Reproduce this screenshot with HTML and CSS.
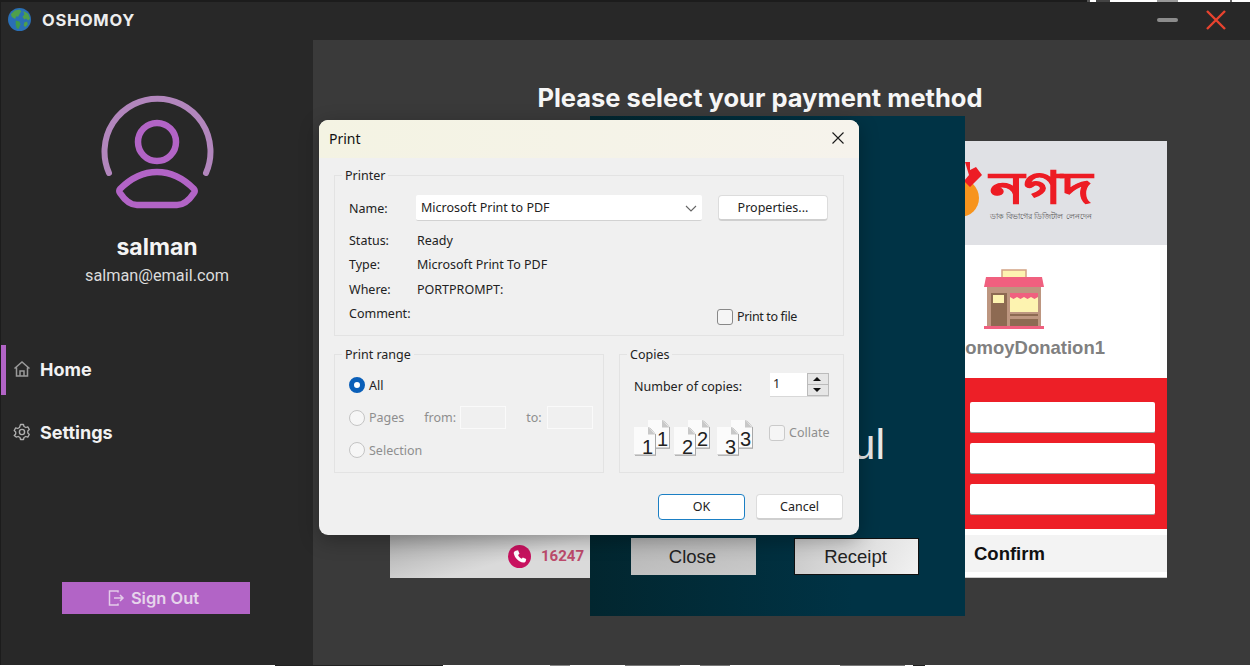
FILE: index.html
```html
<!DOCTYPE html>
<html>
<head>
    <meta charset="utf-8">
    <title>OSHOMOY</title>
    <link rel="stylesheet" href="styles.css">
</head>
<body>
<div class="app">
    <div class="top-strip"></div>
    <div class="titlebar">
        <div class="brand">
            <svg class="globe" viewBox="0 0 24 24">
                <circle cx="12" cy="12" r="12" fill="#2a6fb5"/>
                <path d="M7 2.500l5-1 2 2-2 3-1.500 2.500-2-.5-1 3-3.500-2-1-3z" fill="#4fa04a"/>
                <path d="M16 3l5 3 2 5-2 2-2-2-2 1-2-3 2-2z" fill="#4fa04a"/>
                <path d="M8 13l4 1 1 3-2 5-2-1-1-4z" fill="#3f9a4a"/>
                <path d="M17 15l3-1 .5 3-2.500 3-1.500-2z" fill="#4fa04a"/>
            </svg>
            <span>OSHOMOY</span>
        </div>
        <div class="winbtns">
            <span class="minimize"></span>
            <svg class="closex" viewBox="0 0 20 20"><path d="M1 1l18 18M19 1L1 19" stroke="#e8432f" stroke-width="2.400" fill="none"/></svg>
        </div>
    </div>
    <div class="content">
        <aside class="sidebar">
            <svg class="avatar" viewBox="0 0 114 114">
                <path d="M9 78A53 53 0 1 1 106 78" fill="none" stroke="#b286bd" stroke-width="6" stroke-linecap="round"/>
                <circle cx="57" cy="47" r="19" fill="none" stroke="#b264c6" stroke-width="6.500"/>
                <path d="M57 77c14 0 27 7 37 17 1 1 1 3 0 4-4 6-9 12-17 12H37c-8 0-13-6-17-12-1-1-1-3 0-4 10-10 23-17 37-17z" fill="none" stroke="#b264c6" stroke-width="6.500" stroke-linejoin="round"/>
            </svg>
            <div class="username">salman</div>
            <div class="useremail">salman@email.com</div>
            <nav class="menu">
                <a class="menu-item active">
                    <svg viewBox="0 0 18 18"><path d="M1.500 8.500L9 2l7.500 6.500M3.500 7.500V16h11V7.500M7 16v-5h4v5" fill="none" stroke="#9a9a9a" stroke-width="1.500"/></svg>
                    Home
                </a>
                <a class="menu-item">
                    <svg viewBox="0 0 18 18"><circle cx="9" cy="9" r="2.600" fill="none" stroke="#b0b0b0" stroke-width="1.400"/><path d="M7.500 1.500h3l.5 2 1.800 1 2-.6 1.500 2.600-1.500 1.400v2.200l1.500 1.400-1.500 2.600-2-.6-1.800 1-.5 2h-3l-.5-2-1.800-1-2 .6L1.200 12.500l1.500-1.400V8.900L1.200 7.500 2.700 4.900l2 .6 1.800-1z" fill="none" stroke="#b0b0b0" stroke-width="1.300" stroke-linejoin="round"/></svg>
                    Settings
                </a>
            </nav>
            <button class="signout">
                <svg viewBox="0 0 18 18"><path d="M11 3.500V2H2.500v14H11v-1.500M7 9h9M13 6l3 3-3 3" fill="none" stroke="#e4cbe9" stroke-width="1.500"/></svg>
                Sign Out
            </button>
        </aside>
        <main class="main">
            <h1 class="heading">Please select your payment method</h1>
            <div class="paycard">
                <div class="paycard-left">
                    <div class="helpline">
                        <span class="phone">
                            <svg viewBox="0 0 24 24"><path d="M8 6l2.500-.5 1.500 3.500-1.500 1.500c.8 1.800 2 3 3.800 3.800L15.500 13l3.500 1.500-.5 2.500c-.4 1-1.500 1.500-2.500 1.300C11 17.500 6.800 13 6 8.500 5.900 7.500 6.800 6.400 8 6z" fill="#fff"/></svg>
                        </span>
                        <span class="hotline">16247</span>
                    </div>
                </div>
                <div class="paycard-right">
                    <div class="nagad-head">
                        <svg class="nagad-mark" viewBox="0 0 32 56">
                            <circle cx="10" cy="36" r="19" fill="#f7941d"/>
                            <path d="M15 0h5v8l6-3 6 8-12 12-6-6 5-6z" fill="#ed1c24"/>
                        </svg>
                        <div class="nagad-logo">
                            <span class="nagad-name">নগদ</span>
                            <span class="nagad-sub">ডাক বিভাগের ডিজিটাল লেনদেন</span>
                        </div>
                    </div>
                    <div class="merchant">
                        <svg class="shop" viewBox="0 0 60 60">
                            <rect x="18" y="1" width="24" height="10" fill="#fdf3b0" stroke="#d2a384" stroke-width="1.500"/>
                            <path d="M2 8h56l2 10H0z" fill="#f0607f"/>
                            <rect x="3" y="18" width="54" height="39" fill="#bd9680"/>
                            <rect x="7" y="24" width="16" height="33" fill="#8d6a52"/>
                            <rect x="9" y="26" width="11" height="8" fill="#fdf3b0"/>
                            <rect x="26" y="24" width="28" height="19" fill="#fdf3b0"/>
                            <path d="M26 24h28v4l-3.500 2-3.500-2-3.500 2-3.500-2-3.500 2-3.500-2-3.500 2-3.500-2z" fill="#f0607f"/>
                            <rect x="26" y="45" width="28" height="2" fill="#8d6a52"/>
                            <rect x="26" y="50" width="28" height="7" fill="#8d6a52"/>
                            <rect x="0" y="57" width="60" height="3" fill="#f0607f"/>
                        </svg>
                        <div class="merchant-name">OshomoyDonation1</div>
                    </div>
                    <div class="redform">
                        <input class="redinput" type="text">
                        <input class="redinput" type="text">
                        <input class="redinput" type="text">
                    </div>
                    <div class="confirm-wrap"><div class="confirm">Confirm</div></div>
                </div>
            </div>
        </main>
    </div>
    <div class="bottom-strip"></div>

    <div class="receipt">
        <div class="receipt-msg">Successful</div>
        <div class="receipt-btns">
            <button class="rbtn close-btn">Close</button>
            <button class="rbtn receipt-btn">Receipt</button>
        </div>
    </div>

    <div class="dialog">
        <div class="dlg-title">
            <span>Print</span>
            <svg class="dlg-x" viewBox="0 0 12 12"><path d="M.5.5l11 11M11.500.5l-11 11" stroke="#1a1a1a" stroke-width="1.100" fill="none"/></svg>
        </div>
        <div class="dlg-body">
            <fieldset class="group printer">
                <legend>Printer</legend>
                <div class="row-name">
                    <span class="lbl">Name:</span>
                    <div class="combo">Microsoft Print to PDF
                        <svg viewBox="0 0 12 7"><path d="M1 1l5 5 5-5" fill="none" stroke="#666" stroke-width="1.100"/></svg>
                    </div>
                    <div class="wbtn props">Properties...</div>
                </div>
                <div class="info"><span class="lbl">Status:</span><span>Ready</span></div>
                <div class="info"><span class="lbl">Type:</span><span>Microsoft Print To PDF</span></div>
                <div class="info"><span class="lbl">Where:</span><span>PORTPROMPT:</span></div>
                <div class="info comment">
                    <span class="lbl">Comment:</span>
                    <label class="check tofile"><i class="box"></i>Print to file</label>
                </div>
            </fieldset>
            <div class="dlg-cols">
                <fieldset class="group range">
                    <legend>Print range</legend>
                    <div class="radio on"><i class="dot"></i>All</div>
                    <div class="radio off pages">
                        <i class="dot"></i><span class="pages-lbl">Pages</span>
                        <span class="from">from:</span><i class="field"></i>
                        <span class="to">to:</span><i class="field"></i>
                    </div>
                    <div class="radio off"><i class="dot"></i>Selection</div>
                </fieldset>
                <fieldset class="group copies">
                    <legend>Copies</legend>
                    <div class="copies-row">
                        <span>Number of copies:</span>
                        <div class="spin">
                            <span class="spin-val">1</span>
                            <span class="spin-btns"><i class="up"></i><i class="down"></i></span>
                        </div>
                    </div>
                    <div class="collate-row">
                        <div class="sheets"><i class="s back"></i><i class="s front"></i><b class="num num-back">1</b><b class="num num-front">1</b></div>
                        <div class="sheets"><i class="s back"></i><i class="s front"></i><b class="num num-back">2</b><b class="num num-front">2</b></div>
                        <div class="sheets last"><i class="s back"></i><i class="s front"></i><b class="num num-back">3</b><b class="num num-front">3</b></div>
                        <label class="check collate"><i class="box"></i>Collate</label>
                    </div>
                </fieldset>
            </div>
            <div class="dlg-foot">
                <div class="wbtn ok">OK</div>
                <div class="wbtn cancel">Cancel</div>
            </div>
        </div>
    </div>
</div>
</body>
</html>
```

FILE: styles.css
```css
*{
    padding: 0;
    margin: 0;
    box-sizing: border-box;
}
html, body{
    width: 1250px;
    height: 666px;
    overflow: hidden;
    background: #282828;
}
.app{
    position: relative;
    width: 1250px;
    height: 666px;
    font-family: "Inter", "Liberation Sans", sans-serif;
    display: flex;
    flex-direction: column;
    background: #1c1c1c;
}
/* bits of another window show above and below the app */
.top-strip{
    height: 2px;
    flex: none;
    background: linear-gradient(90deg, #1c1c1c 1087px, #555 1087px, #555 1090px, #fff 1090px, #fff 1096px, #444 1096px, #444 1110px, #fff 1110px, #fff 1157px, #999 1157px, #999 1178px, #fff 1178px, #fff 1230px, #666 1230px, #666 1232px, #fff 1232px);
}
.bottom-strip{
    height: 1px;
    flex: none;
    background: linear-gradient(90deg, #fff 275px, #222 275px, #222 443px, #fff 443px, #fff 550px, #888 550px, #888 570px, #fff 570px, #fff 625px, #777 625px, #777 680px, #fff 680px, #fff 700px, #777 700px, #777 730px, #fff 730px, #fff 840px, #777 840px, #777 905px, #fff 905px, #fff 913px, #222 913px, #222 925px, #fff 925px);
}
.titlebar{
    height: 38px;
    margin-left: 1px;
    background: #282828;
    display: flex;
    justify-content: space-between;
    align-items: center;
    flex: none;
}
.brand{
    display: flex;
    align-items: center;
    padding-left: 7px;
    margin-top: -3px;
    color: #eee;
    font-weight: 700;
    font-size: 16.500px;
    letter-spacing: .7px;
}
.globe{
    width: 23px;
    height: 23px;
    margin-right: 11px;
}
.winbtns{
    display: flex;
    align-items: center;
    margin-top: -2px;
    padding-right: 24px;
}
.minimize{
    width: 21px;
    height: 4px;
    border-radius: 2px;
    background: #8c8c8c;
    margin-right: 28px;
}
.closex{
    width: 20px;
    height: 20px;
}
.content{
    flex: 1;
    margin-left: 1px;
    display: flex;
    min-height: 0;
}
.sidebar{
    width: 312px;
    background: #282828;
    display: flex;
    flex-direction: column;
    align-items: center;
    flex: none;
    padding-top: 55px;
}
.avatar{
    width: 114px;
    height: 114px;
    margin-right: 1px;
}
.username{
    margin-top: 25px;
    color: #f4f4f4;
    font-weight: 700;
    font-size: 23px;
    line-height: 26px;
}
.useremail{
    margin-top: 6px;
    color: #dcdcdc;
    font-family: "Roboto", "Liberation Sans", sans-serif;
    font-size: 16.300px;
    line-height: 20px;
}
.menu{
    width: 100%;
    margin-top: 59px;
}
.menu-item{
    display: flex;
    align-items: center;
    height: 50px;
    margin-bottom: 13px;
    padding-left: 13px;
    padding-bottom: 2px;
    color: #f2f2f2;
    font-weight: 700;
    font-size: 18px;
    border-left: 5px solid transparent;
}
.menu-item.active{
    border-left-color: #b264c6;
}
.menu-item svg{
    width: 18px;
    height: 18px;
    margin-right: 9px;
    margin-left: -6px;
}
.signout{
    margin-top: 111px;
    margin-right: 3px;
    width: 188px;
    height: 32px;
    padding-right: 5px;
    border: none;
    background: #b264c6;
    color: #e6d4eb;
    font-family: inherit;
    font-weight: 600;
    font-size: 16.500px;
    display: flex;
    align-items: center;
    justify-content: center;
}
.signout svg{
    width: 18px;
    height: 18px;
    margin-right: 6px;
}
.main{
    flex: 1;
    background: #3a3a3a;
    position: relative;
    padding-top: 42px;
}
.heading{
    font-size: 25.500px;
    line-height: 32px;
    font-weight: 700;
    color: #f6f6f6;
    text-align: center;
    padding-right: 43px;
}
.paycard{
    margin: 27px 0 0 77px;
    width: 777px;
    height: 437px;
    display: flex;
}
.paycard-left{
    width: 200px;
    display: flex;
    flex-direction: column;
    justify-content: flex-end;
}
.helpline{
    height: 44px;
    background: linear-gradient(165deg, #a8a8a8, #dadada 60%);
    display: flex;
    align-items: center;
    justify-content: flex-end;
    padding-right: 6px;
}
.phone{
    width: 23px;
    height: 23px;
    border-radius: 50%;
    background: #c8125f;
    margin-right: 10px;
    display: flex;
}
.hotline{
    color: #bd4b6c;
    font-family: "Roboto", "Liberation Sans", sans-serif;
    font-weight: 700;
    font-size: 15px;
}
.paycard-right{
    flex: 1;
    background: #fff;
    display: flex;
    flex-direction: column;
    border-bottom: 1px solid #ccc;
}
.nagad-head{
    height: 104px;
    background: #e0e1e5;
    display: flex;
    justify-content: flex-end;
    padding-right: 72px;
    padding-top: 21px;
}
.nagad-mark{
    width: 32px;
    height: 56px;
    margin-right: 8px;
}
.nagad-logo{
    display: flex;
    flex-direction: column;
    width: 105px;
}
.nagad-name{
    display: block;
    font-family: "Noto Sans", "Liberation Sans", sans-serif;
    font-weight: 700;
    font-size: 44px;
    line-height: 48px;
    color: #ed1c24;
    -webkit-text-stroke: 1px #ed1c24;
    transform: scaleX(1.300);
    transform-origin: left center;
}
.nagad-sub{
    font-size: 7.800px;
    line-height: 10px;
    color: #555;
    white-space: nowrap;
    margin-top: 1px;
}
.merchant{
    height: 133px;
    display: flex;
    flex-direction: column;
    align-items: flex-end;
    padding-top: 24px;
}
.shop{
    width: 60px;
    height: 60px;
    margin-right: 123px;
}
.merchant-name{
    margin-top: 8px;
    margin-right: 62px;
    color: #808080;
    font-family: "Liberation Sans", sans-serif;
    font-weight: 700;
    font-size: 18.500px;
}
.redform{
    height: 151px;
    background: #ed1f27;
    display: flex;
    flex-direction: column;
    align-items: flex-end;
    gap: 10px;
    padding: 24px 12px 0 0;
}
.redinput{
    width: 185px;
    height: 31px;
    border: none;
    border-bottom: 1px solid #999;
    border-radius: 2px;
    background: #fff;
}
.confirm-wrap{
    flex: 1;
    padding: 6px 0 0;
}
.confirm{
    height: 37px;
    background: #f3f3f3;
    padding-left: 384px;
    font-family: "Liberation Sans", sans-serif;
    font-weight: 700;
    font-size: 18.500px;
    line-height: 37px;
    color: #111;
}
.receipt{
    position: absolute;
    left: 590px;
    top: 116px;
    width: 375px;
    height: 500px;
    background: linear-gradient(90deg, #02262f, #003345 70%);
    display: flex;
    flex-direction: column;
    justify-content: flex-end;
    padding: 0 0 41px 41px;
}
.receipt-msg{
    position: absolute;
    right: 80px;
    top: 300px;
    color: #e8e8e8;
    font-family: "Liberation Sans", sans-serif;
    font-size: 43px;
    line-height: 56px;
}
.receipt-btns{
    display: flex;
    gap: 38px;
}
.rbtn{
    width: 125px;
    height: 37px;
    padding-right: 2px;
    border: none;
    font-family: "Liberation Sans", sans-serif;
    font-size: 18.500px;
    color: #222;
}
.close-btn{
    background: linear-gradient(165deg, #b4b4b4, #cacaca);
}
.receipt-btn{
    background: linear-gradient(120deg, #c8c8c8, #f2f2f2);
    border: 1px solid #111;
}
.dialog{
    position: absolute;
    left: 319px;
    top: 120px;
    width: 540px;
    height: 415px;
    background: #f0f0f0;
    border-radius: 9px;
    overflow: hidden;
    font-family: "Noto Sans", "Liberation Sans", sans-serif;
    font-size: 12.500px;
    color: #222;
    box-shadow: 0 5px 20px rgba(0,0,0,.3);
}
.dlg-title{
    height: 38px;
    background: linear-gradient(90deg, #f4f3e3, #f6f3ec);
    display: flex;
    align-items: center;
    justify-content: space-between;
    padding: 0 15px 2px 10px;
    font-size: 14px;
    color: #111;
}
.dlg-x{
    width: 12px;
    height: 12px;
}
.dlg-body{
    padding: 8px 15px 0;
}
.group{
    border: 1.500px solid #e3e3e3;
}
.group legend{
    margin-left: -7px;
    padding: 2px 3px 0;
    font-size: 12.500px;
    line-height: 16px;
}
.printer{
    height: 170px;
    padding: 0 15px 0 14px;
}
.row-name{
    display: flex;
    align-items: center;
    height: 26px;
    margin-top: 11px;
    margin-bottom: 10px;
}
.lbl{
    width: 68px;
    flex: none;
}
.row-name .lbl{
    width: 67px;
}
.combo{
    width: 286px;
    height: 26px;
    background: #fff;
    border-bottom: 1.500px solid #d2d2d2;
    border-radius: 2px;
    padding: 1px 0 0 5px;
    line-height: 24px;
    display: flex;
    justify-content: space-between;
    align-items: center;
}
.combo svg{
    width: 12px;
    height: 7px;
    margin-right: 5px;
}
.wbtn{
    background: #fff;
    border: 1px solid #dcdcdc;
    border-bottom: 2px solid #cfcfcf;
    border-radius: 4px;
    text-align: center;
}
.props{
    width: 110px;
    height: 26px;
    line-height: 24px;
    margin-left: 16px;
}
.info{
    display: flex;
    height: 24.300px;
    line-height: 20px;
}
.comment{
    justify-content: space-between;
}
.check{
    display: flex;
    align-items: center;
}
.box{
    width: 16px;
    height: 16px;
    border: 1.500px solid #888;
    border-radius: 3px;
    background: #f5f5f5;
    margin-right: 4px;
}
.tofile{
    margin-top: 3px;
    margin-right: 31px;
    height: 20px;
    letter-spacing: -.35px;
}
.dlg-cols{
    display: flex;
    gap: 15px;
    margin-top: 9px;
}
.range{
    width: 270px;
    height: 128px;
    padding: 6px 0 0 14px;
}
.copies{
    width: 225px;
    height: 128px;
    padding: 0 0 0 14px;
}
.radio{
    display: flex;
    align-items: center;
    height: 33px;
    margin-top: -.5px;
}
.radio.off{
    color: #8e8e8e;
}
.dot{
    width: 16px;
    height: 16px;
    border-radius: 50%;
    border: 1.500px solid #c4c4c4;
    background: #f6f6f6;
    margin-right: 4px;
    flex: none;
}
.radio.on .dot{
    border: 5px solid #0a5fb8;
    background: #fff;
}
.from{
    margin-left: 20px;
    margin-right: 4px;
}
.to{
    margin-left: 20px;
    margin-right: 5px;
}
.field{
    width: 46px;
    height: 23px;
    border: 1.500px solid #fafafa;
    background: #f0f0f0;
}
.copies-row{
    display: flex;
    align-items: center;
    justify-content: space-between;
    height: 26px;
    margin-top: 10px;
    padding-right: 14px;
}
.spin{
    width: 59px;
    height: 24px;
    margin-top: -2px;
    display: flex;
    background: #fff;
    border-bottom: 1px solid #d8d8d8;
}
.spin-val{
    flex: 1;
    padding-left: 3px;
    line-height: 22px;
}
.spin-btns{
    width: 22px;
    display: flex;
    flex-direction: column;
    border: 1.500px solid #bbb;
    background: #e6e6e6;
}
.spin-btns i{
    flex: 1;
    display: block;
    position: relative;
}
.up::after, .down::after{
    content: "";
    position: absolute;
    left: 5px;
    top: 3px;
    border: 4px solid transparent;
    border-top: none;
    border-bottom: 4px solid #111;
}
.down{
    border-top: 1px solid #bbb;
}
.down::after{
    border-bottom: none;
    border-top: 4px solid #111;
}
.collate-row{
    display: flex;
    margin-top: 20.500px;
    height: 40px;
}
.sheets{
    position: relative;
    width: 40px;
    height: 37px;
}
.sheets + .sheets{
    width: 43px;
}
.sheets.last{
    width: 52px;
}
/* a page: the clipped shape is in ::before, so the filter can outline the cut corner */
.s{
    position: absolute;
    display: block;
    width: 21px;
    height: 28px;
    filter: drop-shadow(1.500px 1.500px 0 #a8a8a8) drop-shadow(0 0 .6px #9a9a9a);
}
.s::before{
    content: "";
    position: absolute;
    left: 0;
    top: 0;
    width: 100%;
    height: 100%;
    background: #fbfbfb;
    clip-path: polygon(0 0, 70% 0, 100% 26%, 100% 100%, 0 100%);
}
.s::after{
    content: "";
    position: absolute;
    right: 0;
    top: 0;
    width: 7px;
    height: 8px;
    background: #c8c8c8;
    clip-path: polygon(0 0, 100% 100%, 0 100%);
}
.back{
    left: 14px;
    top: 0;
}
.front{
    left: 0;
    top: 7px;
}
.num{
    position: absolute;
    font-family: "Liberation Sans", sans-serif;
    font-weight: 400;
    font-size: 20px;
    line-height: 18px;
    color: #222;
}
.num-back{
    left: 23px;
    top: 10px;
}
.num-front{
    left: 8px;
    top: 18px;
}
.collate{
    color: #8e8e8e;
    height: 20px;
    margin-top: 3px;
}
.collate .box{
    border-color: #cacaca;
}
.dlg-foot{
    display: flex;
    justify-content: flex-end;
    gap: 11px;
    margin-top: 21px;
    padding-right: 1px;
}
.ok{
    width: 87px;
    height: 26px;
    line-height: 23px;
    border: 1.500px solid #1b7fc4;
}
.cancel{
    width: 87px;
    height: 26px;
    line-height: 24px;
}
```
